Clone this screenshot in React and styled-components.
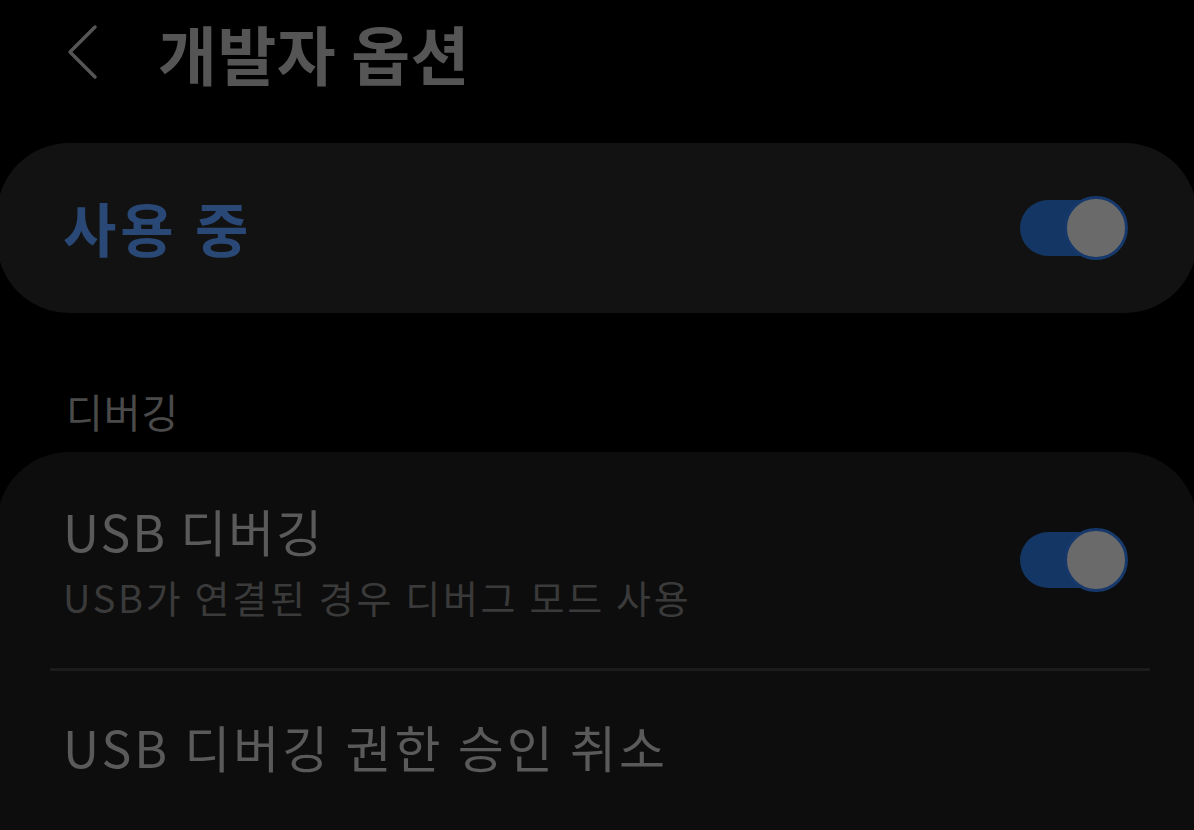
import React from 'react';
import styled, { createGlobalStyle } from 'styled-components';

const GlobalStyle = createGlobalStyle`
  html, body {
    margin: 0;
    padding: 0;
    background: #000;
    overflow: hidden;
  }
  body {
    font-family: "Noto Sans CJK KR", "Noto Sans", sans-serif;
  }
`;

const Screen = styled.div`
  width: 1194px;
  height: 830px;
  background: #000;
  overflow: hidden;
`;

const Header = styled.div`
  display: flex;
  align-items: center;
  height: 104px;
  padding-left: 66px;
  gap: 58px;
`;

const Title = styled.h1`
  margin: 0;
  font-size: 64px;
  font-weight: 700;
  color: #555;
  letter-spacing: 0.5px;
  line-height: 1;
`;

const Card = styled.div`
  margin: ${({ top }) => top}px -3px 0;
  padding-bottom: ${({ tail }) => tail || 0}px;
  background: ${({ bg }) => bg};
  border-radius: 72px;
  overflow: hidden;
`;

const Row = styled.div`
  display: flex;
  align-items: center;
  justify-content: space-between;
  height: ${({ h }) => h}px;
  padding: 0 85px 0 66px;
`;

const TextCol = styled.div`
  display: flex;
  flex-direction: column;
  gap: 14px;
`;

const MainLabel = styled.div`
  font-size: ${({ big }) => (big ? 58 : 50)}px;
  font-weight: ${({ big }) => (big ? 700 : 400)};
  color: ${({ accent }) => (accent ? '#2a4875' : '#5a5a5a')};
  letter-spacing: ${({ big, wide }) => (big ? 4 : wide ? 3 : 2)}px;
  line-height: 1.2;
`;

const SubLabel = styled.div`
  font-size: 38px;
  color: #3a3a3a;
  letter-spacing: 2.7px;
  line-height: 1.2;
`;

const Section = styled.div`
  padding: 0 0 0 66px;
  margin-top: 74px;
  font-size: 40px;
  color: #4a4a4a;
  letter-spacing: 1px;
  line-height: 1.2;
`;

const Divider = styled.div`
  height: 3px;
  margin: 0 47px 0 53px;
  background: #1c1c1c;
`;

const Track = styled.div`
  position: relative;
  width: 92px;
  height: 56px;
  border-radius: 28px;
  background: #143664;
`;

const Knob = styled.div`
  position: absolute;
  right: -16px;
  top: -4px;
  width: 58px;
  height: 58px;
  border-radius: 50%;
  background: #6a6a6a;
  border: 3px solid #16386a;
`;

const Toggle = () => (
  <Track>
    <Knob />
  </Track>
);

const Back = () => (
  <svg width="34" height="56" viewBox="0 0 34 56" fill="none">
    <path d="M29 3 L4 28 L29 53" stroke="#555" strokeWidth="3.5" strokeLinecap="round" strokeLinejoin="round" />
  </svg>
);

export default function App() {
  return (
    <Screen>
      <GlobalStyle />
      <Header>
        <Back />
        <Title>개발자 옵션</Title>
      </Header>
      <Card top={39} bg="#121212">
        <Row h={170}>
          <MainLabel big accent>사용 중</MainLabel>
          <Toggle />
        </Row>
      </Card>
      <Section>디버깅</Section>
      <Card top={17} bg="#0d0d0d" tail={80}>
        <Row h={216}>
          <TextCol>
            <MainLabel>USB 디버깅</MainLabel>
            <SubLabel>USB가 연결된 경우 디버그 모드 사용</SubLabel>
          </TextCol>
          <Toggle />
        </Row>
        <Divider />
        <Row h={150}>
          <MainLabel wide>USB 디버깅 권한 승인 취소</MainLabel>
        </Row>
      </Card>
    </Screen>
  );
}
